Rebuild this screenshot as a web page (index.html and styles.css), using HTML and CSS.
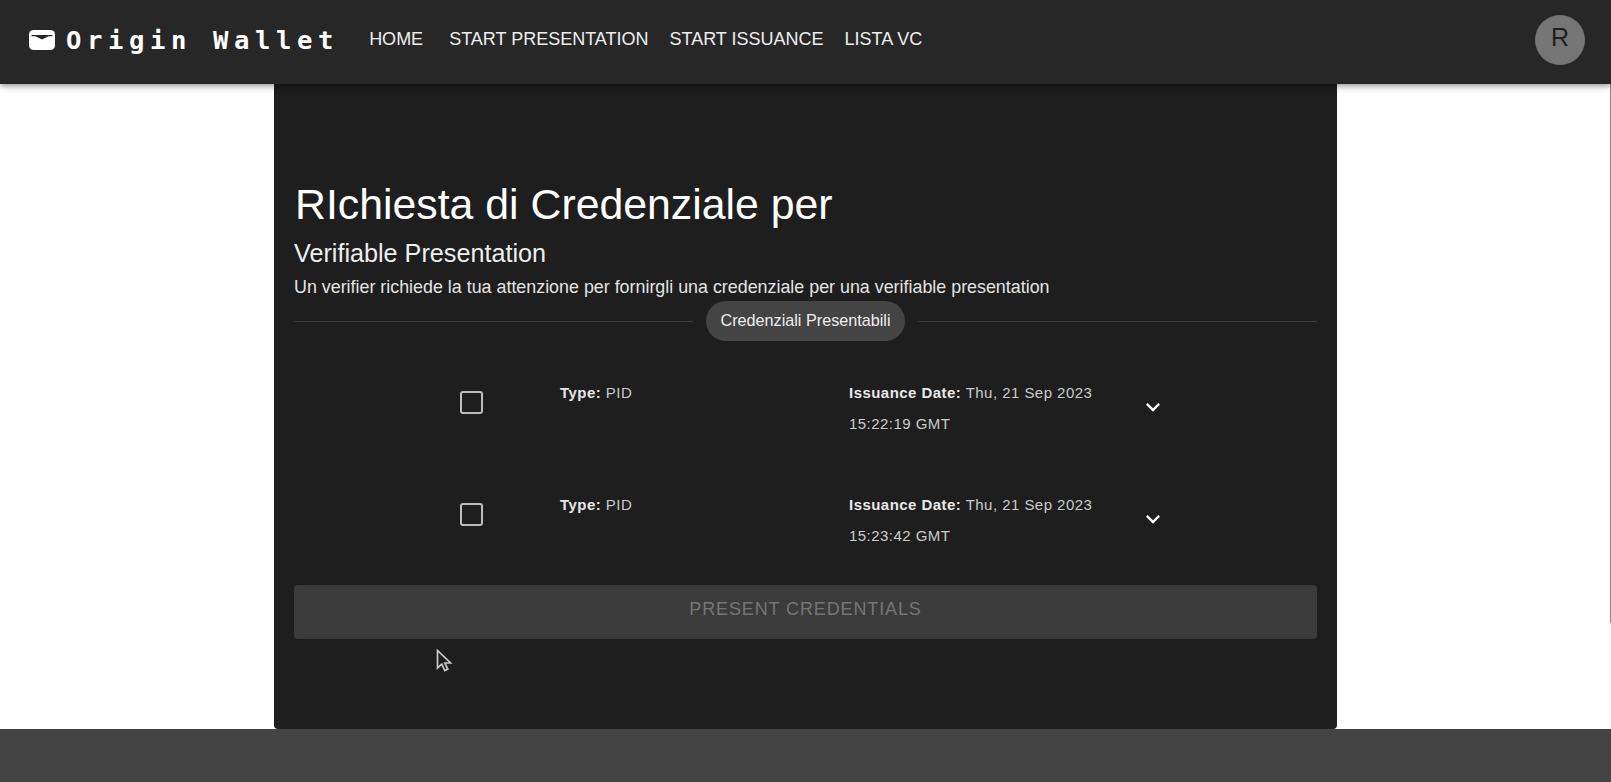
FILE: index.html
```html
<!DOCTYPE html>
<html lang="it">
<head>
<meta charset="utf-8">
<title>Origin Wallet</title>
<link rel="stylesheet" href="styles.css">
</head>
<body>
<div class="app">
  <header class="navbar">
    <svg class="logo-icon" viewBox="0 0 26 20" aria-hidden="true">
      <rect width="26" height="20" rx="4.500" fill="#fff"/>
      <path fill="#272727" d="M2.500 5h21v1.200h-4L13 9.600 6.500 6.200h-4z"/>
    </svg>
    <span class="brand">Origin Wallet</span>
    <nav class="nav-links">
      <a class="nav-link nav-home">HOME</a>
      <a class="nav-link">START PRESENTATION</a>
      <a class="nav-link">START ISSUANCE</a>
      <a class="nav-link">LISTA VC</a>
    </nav>
    <div class="avatar">R</div>
  </header>
  <main class="content">
    <section class="card">
      <h1 class="title">RIchiesta di Credenziale per</h1>
      <h2 class="subtitle">Verifiable Presentation</h2>
      <p class="lead">Un verifier richiede la tua attenzione per fornirgli una credenziale per una verifiable presentation</p>
      <div class="divider"><span class="chip">Credenziali Presentabili</span></div>
      <div class="cred">
        <div class="check-cell"><span class="checkbox"></span></div>
        <div class="type-cell"><b>Type:</b> PID</div>
        <div class="date-cell"><div><b>Issuance Date:</b> Thu, 21 Sep 2023</div><div>15:22:19 GMT</div></div>
        <svg class="chevron" viewBox="0 0 24 24" aria-hidden="true"><path fill="#fff" d="M7.410 8.590 12 13.170l4.590-4.580L18 10l-6 6-6-6z"/></svg>
      </div>
      <div class="cred">
        <div class="check-cell"><span class="checkbox"></span></div>
        <div class="type-cell"><b>Type:</b> PID</div>
        <div class="date-cell"><div><b>Issuance Date:</b> Thu, 21 Sep 2023</div><div>15:23:42 GMT</div></div>
        <svg class="chevron" viewBox="0 0 24 24" aria-hidden="true"><path fill="#fff" d="M7.410 8.590 12 13.170l4.590-4.580L18 10l-6 6-6-6z"/></svg>
      </div>
      <button class="present" disabled>PRESENT CREDENTIALS</button>
      <svg class="cursor" viewBox="0 0 18 24" aria-hidden="true"><path fill="#1e1e1e" stroke="#c8c8c8" stroke-width="1.700" d="M1.500 1.500v17.500l4.300-3.800 3 6.300 3-1.400-3-6.100h5.700z"/></svg>
    </section>
    <span class="edge-line"></span>
  </main>
  <footer class="footer"></footer>
</div>
</body>
</html>
```
FILE: styles.css
```css
* { box-sizing: border-box; }
html, body { margin: 0; height: 100%; }
body { background: #fff; font-family: "Liberation Sans", Arial, sans-serif; overflow: hidden; }
.app { height: 782px; display: flex; flex-direction: column; }
.navbar {
  height: 84px; flex: none; background: #272727; color: #fff;
  display: flex; align-items: center; padding: 0 24px 0 29px;
  box-shadow: 0 2px 4px -1px rgba(0,0,0,.2), 0 4px 5px rgba(0,0,0,.14), 0 1px 10px rgba(0,0,0,.12);
  position: relative; z-index: 1;
}
.logo-icon { width: 26px; height: 20px; margin: -4px 11px 0 0; flex: none; }
.brand {
  font: 700 25.600px "DejaVu Sans Mono", monospace; letter-spacing: 5.600px;
  white-space: nowrap; margin-top: -4px;
}
.nav-links { display: flex; margin-left: 30px; margin-top: -5px; }
.nav-link { font-size: 18px; color: #eee; margin-right: 21px; }
.nav-home { margin-right: 26px; }
.avatar {
  margin-left: auto; width: 50px; height: 50px; border-radius: 50%;
  background: #757575; color: #1e1e1e; font-size: 25px;
  display: flex; align-items: center; justify-content: center;
  margin-top: -4px; margin-right: 2px; padding-bottom: 5px;
}
.content { flex: 1; display: flex; justify-content: center; min-height: 0; position: relative; }
.card {
  width: 1063px; background: #1e1e1e; color: #fff; border-radius: 0 0 4px 4px;
  padding: 97px 20px 0; position: relative;
}
.title { margin: 0 0 0 1px; font-size: 42.800px; line-height: 46px; font-weight: 400; }
.subtitle { margin: 12px 0 0; font-size: 25.200px; line-height: 28px; font-weight: 400; color: #eee; }
.lead { margin: 7px 0 0; font-size: 17.860px; line-height: 26px; color: #e4e4e4; }
.divider { display: flex; align-items: center; gap: 13px; height: 40px; margin-top: 1px; }
.divider::before, .divider::after { content: ""; flex: 1; border-top: 1px solid #3d3d3d; }
.chip {
  height: 40px; padding: 0 14px 2px; border-radius: 20px; background: #444; color: #eee;
  font-size: 16.200px; display: flex; align-items: center;
}
.cred {
  display: flex; height: 112px; padding-top: 36px; font-size: 15px; line-height: 31px;
  letter-spacing: .46px; color: #ccc;
}
.cred b { color: #e8e8e8; }
.check-cell { width: 266px; padding: 14px 0 0 165.500px; flex: none; }
.checkbox { display: block; width: 23px; height: 23px; border: 2.500px solid #bdbdbd; border-radius: 3px; }
.type-cell { width: 289px; flex: none; }
.date-cell { width: 270px; flex: none; }
.chevron { width: 28px; height: 28px; margin: 16px 0 0 20px; flex: none; }
.present {
  display: block; width: 100%; height: 54px; margin-top: 20px; border: 0; border-radius: 4px;
  background: #3b3b3b; color: #757575; font: 18px "Liberation Sans", Arial, sans-serif;
  letter-spacing: .88px; padding-bottom: 7px;
}
.cursor { position: absolute; left: 162px; top: 565px; width: 18px; height: 24px; }
.edge-line { position: absolute; right: 0; top: 0; width: 1px; height: 539px; background: #8a8a8a; }
.footer { height: 53px; flex: none; background: #444; }
```
